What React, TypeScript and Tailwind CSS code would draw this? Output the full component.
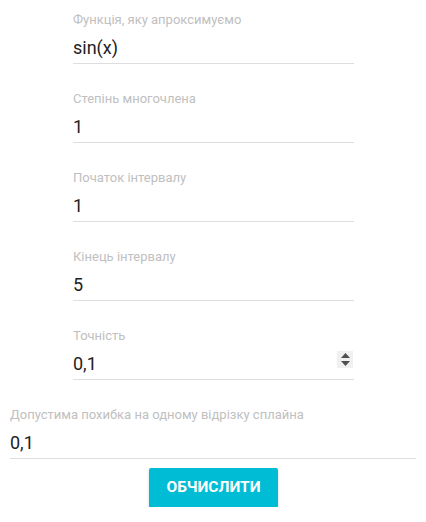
import React from "react";

function Field({ label, value, spinner }: { label: string; value: string; spinner?: boolean }) {
  return (
    <div className="h-[79px] flex flex-col justify-end">
      <div className="text-[13px] leading-[16px] text-[#c0c0c0]">{label}</div>
      <div className="relative mt-[7px] h-[29px] pb-[2px] border-b border-[#dedede] text-[18px] leading-[26px] text-[#222222]">
        {value}
        {spinner && (
          <div className="absolute right-[1px] top-[0px] w-[16px] h-[17px] bg-[#f0f0f0] flex flex-col items-center justify-center gap-[3px]">
            <svg width="9" height="5" viewBox="0 0 9 5" className="block"><path d="M0 5 L4.5 0 L9 5 Z" fill="#4f4f4f" /></svg>
            <svg width="9" height="5" viewBox="0 0 9 5" className="block"><path d="M0 0 L4.5 5 L9 0 Z" fill="#4f4f4f" /></svg>
          </div>
        )}
      </div>
    </div>
  );
}

export default function App() {
  return (
    <div className="w-[426px] h-[522px] bg-white" style={{ fontFamily: "Roboto, 'Noto Sans', sans-serif" }}>
      <div className="mt-[-15px]">
        <div className="ml-[73px] w-[281px]">
          <Field label="Функція, яку апроксимуємо" value="sin(x)" />
          <Field label="Степінь многочлена" value="1" />
          <Field label="Початок інтервалу" value="1" />
          <Field label="Кінець інтервалу" value="5" />
          <Field label="Точність" value="0,1" spinner />
        </div>
        <div className="mx-[10px]">
          <Field label="Допустима похибка на одному відрізку сплайна" value="0,1" />
        </div>
      </div>
      <div className="flex justify-center mt-[9px]">
        <button className="ml-[1px] w-[129px] h-[40px] rounded-[2px] bg-[#00bcd4] text-white text-[15.5px] font-bold uppercase shadow-[0_2px_3px_rgba(0,0,0,0.18)]">
          Обчислити
        </button>
      </div>
    </div>
  );
}
